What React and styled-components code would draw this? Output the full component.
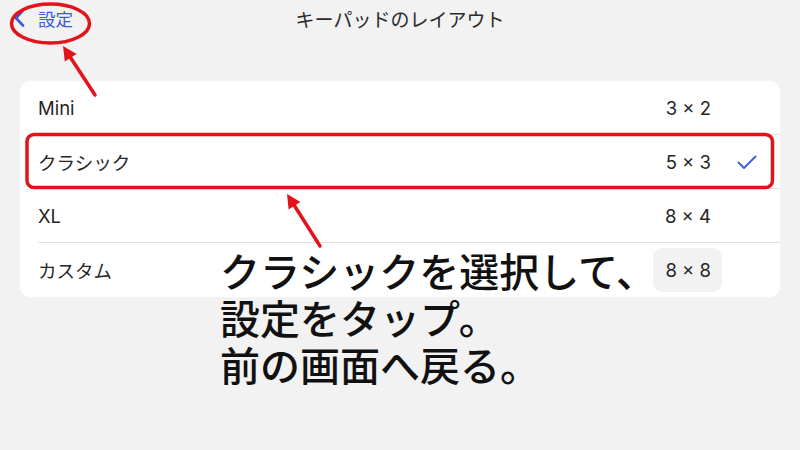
import React from "react";
import styled, { createGlobalStyle } from "styled-components";

const GlobalStyle = createGlobalStyle`
  html, body {
    margin: 0;
    padding: 0;
    background: #f2f2f2;
  }
  body {
    font-family: Inter, "Noto Sans CJK JP", sans-serif;
    -webkit-font-smoothing: antialiased;
  }
`;

// page frame
const Page = styled.div`
  position: relative;
  width: 800px;
  height: 450px;
  overflow: hidden;
  background: #f2f2f2;
`;

const Header = styled.header`
  position: relative;
  height: 36px;
  display: flex;
  align-items: center;
  justify-content: center;
`;

const BackButton = styled.button`
  position: absolute;
  left: 14px;
  top: 0;
  height: 36px;
  display: flex;
  align-items: center;
  gap: 13px;
  padding: 0;
  border: none;
  background: transparent;
  color: #3a5bd6;
  font-family: "Noto Sans CJK JP", sans-serif;
  font-size: 17.5px;
`;

const Title = styled.h1`
  margin: 0;
  font-family: "Noto Sans CJK JP", sans-serif;
  font-size: 19px;
  font-weight: 400;
  color: #2b2b2b;
`;

const Card = styled.ul`
  list-style: none;
  margin: 45px 20px 0;
  padding: 0;
  background: #fff;
  border-radius: 10px;
  overflow: hidden;
`;

const Row = styled.li`
  position: relative;
  height: 54px;
  display: grid;
  grid-template-columns: 1fr auto 38px;
  align-items: center;
  column-gap: 15px;
  padding: 0 16px 0 18px;
  &:not(:last-child)::after {
    content: "";
    position: absolute;
    left: 18px;
    right: 0;
    bottom: 0;
    height: 1px;
    background: #e2e2e2;
  }
`;

const Label = styled.span`
  font-size: 18.5px;
  color: #262626;
`;

const Value = styled.span`
  font-size: 18.5px;
  color: #262626;
  padding: ${(p) => (p.$pressed ? "11px 11px 11px 12px" : "0")};
  margin-right: ${(p) => (p.$pressed ? "-11px" : "0")};
  margin-left: ${(p) => (p.$pressed ? "-12px" : "0")};
  border-radius: 9px;
  background: ${(p) => (p.$pressed ? "#f2f2f2" : "transparent")};
`;

const Check = styled.span`
  display: flex;
  padding-left: 11px;
  color: #3a5bd6;
`;

const Overlay = styled.svg`
  position: absolute;
  inset: 0;
  pointer-events: none;
`;

const Note = styled.p`
  position: absolute;
  left: 220px;
  top: 247px;
  margin: 0;
  font-family: "Noto Sans CJK JP", sans-serif;
  font-size: 40px;
  font-weight: 500;
  line-height: 47px;
  color: #111;
`;

const rows = [
  { label: "Mini", value: "3 × 2" },
  { label: "クラシック", value: "5 × 3", checked: true },
  { label: "XL", value: "8 × 4" },
  { label: "カスタム", value: "8 × 8", pressed: true },
];

const Chevron = () => (
  <svg width="11" height="18" viewBox="0 0 11 18">
    <path d="M9 1.5 L2 9 L9 16.5" fill="none" stroke="currentColor" strokeWidth="2.6" strokeLinecap="round" strokeLinejoin="round" />
  </svg>
);

const Tick = () => (
  <svg width="20" height="15" viewBox="0 0 20 15">
    <path d="M1.5 7.5 L7 13 L18.5 1.5" fill="none" stroke="currentColor" strokeWidth="1.8" strokeLinecap="round" strokeLinejoin="round" />
  </svg>
);

export default function App() {
  return (
    <>
      <GlobalStyle />
      <Page>
        <Header>
          <BackButton>
            <Chevron />
            設定
          </BackButton>
          <Title>キーパッドのレイアウト</Title>
        </Header>
        <Card>
          {rows.map((r) => (
            <Row key={r.label}>
              <Label>{r.label}</Label>
              <Value $pressed={r.pressed}>{r.value}</Value>
              <Check>{r.checked && <Tick />}</Check>
            </Row>
          ))}
        </Card>

        {/* red markup drawn over the screenshot */}
        <Overlay width="800" height="450" viewBox="0 0 800 450">
          <g stroke="#e3131b" strokeWidth="3.5" fill="none" strokeLinecap="round">
            <ellipse cx="50.5" cy="23.5" rx="39" ry="19.5" />
            <rect x="27" y="134.5" width="745.5" height="53" rx="7" />
            <line x1="95" y1="95" x2="70.7" y2="57.7" />
            <line x1="320" y1="246" x2="294.5" y2="205.8" />
          </g>
          <g fill="#e3131b">
            <polygon points="63,46 76.6,53.9 64.8,61.5" />
            <polygon points="287,194 300.4,202.1 288.6,209.6" />
          </g>
        </Overlay>

        <Note>
          クラシックを選択して、
          <br />
          設定をタップ。
          <br />
          前の画面へ戻る。
        </Note>
      </Page>
    </>
  );
}
